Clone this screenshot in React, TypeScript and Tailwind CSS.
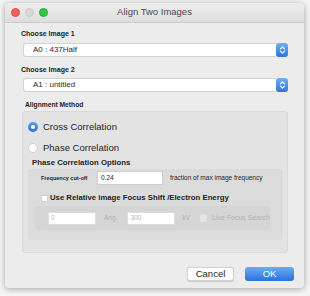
import React from "react";

function Stepper() {
  return (
    <div className="w-[12px] h-[14px] rounded-[3px] bg-gradient-to-b from-[#6fb0f5] to-[#2f74d8] flex items-center justify-center">
      <svg width="7" height="10" viewBox="0 0 7 10" fill="none" stroke="white" strokeWidth="1.1" strokeLinecap="round" strokeLinejoin="round">
        <path d="M1.5 3.8 L3.5 1.8 L5.5 3.8" />
        <path d="M1.5 6.2 L3.5 8.2 L5.5 6.2" />
      </svg>
    </div>
  );
}

function Select({ value }: { value: string }) {
  return (
    <div className="flex items-center h-[14px] w-[265px]">
      <div className="flex-1 h-[14px] bg-white rounded-l-[3px] border border-[#d4d3d4] border-r-0 flex items-center pl-[9px] text-[8px] text-[#2a2a2a]">
        {value}
      </div>
      <Stepper />
    </div>
  );
}

export default function App() {
  return (
    <div
      className="w-[310px] h-[296px] bg-[#f5f5f5] pt-[3px] pl-[5px]"
      style={{ fontFamily: '"Liberation Sans", Arial, sans-serif' }}
    >
      <div className="w-[299px] h-[285px] bg-[#edeced] rounded-[4px] shadow-[0_1px_6px_rgba(0,0,0,0.35)] flex flex-col overflow-hidden">
        {/* title bar */}
        <div className="h-[20px] shrink-0 grid grid-cols-[1fr_auto_1fr] items-center bg-gradient-to-b from-[#ededed] to-[#dedede] border-b border-[#cbcbcb]">
          <div className="flex items-center gap-[5px] pl-[6px]">
            <div className="w-[9px] h-[9px] rounded-full bg-[#fc5f57] border border-[#e2463f]" />
            <div className="w-[9px] h-[9px] rounded-full bg-[#d9d8d9] border border-[#cccbcc]" />
            <div className="w-[9px] h-[9px] rounded-full bg-[#33c748] border border-[#27aa35]" />
          </div>
          <div className="text-[9.5px] text-[#4a4a4a]">Align Two Images</div>
          <div />
        </div>

        {/* content */}
        <div className="flex flex-col pl-[16px]">
          <div className="mt-[6px] h-[9px] leading-[9px] text-[7px] font-bold text-[#222]">Choose Image 1</div>
          <div className="mt-[5px] ml-[2px]">
            <Select value="A0 : 437Half" />
          </div>
          <div className="mt-[8px] h-[9px] leading-[9px] text-[7px] font-bold text-[#222]">Choose Image 2</div>
          <div className="mt-[4px] ml-[2px]">
            <Select value="A1 : untitled" />
          </div>
          <div className="mt-[8px] ml-[4px] h-[9px] leading-[9px] text-[6.7px] font-bold text-[#222]">Alignment Method</div>

          {/* outer group */}
          <div className="mt-[2px] ml-[1px] w-[266px] h-[142px] bg-[#e4e3e4] border border-[#dad9da] rounded-[3px] flex flex-col">
            <div className="mt-[9px] ml-[5px] flex items-center h-[12px]">
              <div className="w-[10px] h-[10px] rounded-full bg-gradient-to-b from-[#5aa2f2] to-[#2b70d9] flex items-center justify-center">
                <div className="w-[4px] h-[4px] rounded-full bg-white" />
              </div>
              <span className="ml-[5px] text-[9.5px] text-[#1e1e1e]">Cross Correlation</span>
            </div>
            <div className="mt-[9px] ml-[5px] flex items-center h-[12px]">
              <div className="w-[10px] h-[10px] rounded-full bg-white border border-[#cfcecf]" />
              <span className="ml-[5px] text-[9.5px] text-[#1e1e1e]">Phase Correlation</span>
            </div>
            <div className="mt-[4px] ml-[9px] h-[10px] leading-[10px] text-[7.8px] font-bold text-[#222]">Phase Correlation Options</div>

            {/* inner group */}
            <div className="mt-[1px] ml-[5px] w-[255px] h-[71px] bg-[#dcdbdc] rounded-[3px] flex flex-col">
              <div className="mt-[2px] flex items-center h-[14px]">
                <span className="ml-[13px] w-[56px] text-[5.5px] text-[#222] font-semibold">Frequency cut-off</span>
                <div className="w-[66px] h-[14px] bg-white border border-[#d0cfd0] flex items-center pl-[3px] text-[6.5px] text-[#222]">0.24</div>
                <span className="ml-[7px] text-[6.5px] text-[#222]">fraction of max image frequency</span>
              </div>
              <div className="mt-[8px] ml-[13px] flex items-center h-[10px]">
                <div className="w-[7px] h-[7px] bg-white border border-[#d0cfd0] rounded-[1px]" />
                <span className="ml-[2px] text-[7.75px] font-bold text-[#222]">Use Relative image Focus Shift /Electron Energy</span>
              </div>
              {/* inner-inner */}
              <div className="mt-[3px] ml-[7px] w-[235px] h-[24px] bg-[#d6d5d6] rounded-[3px] flex items-center overflow-hidden">
                <div className="ml-[13px] w-[49px] h-[13px] bg-white border border-[#dddcdd] flex items-center pl-[2px] text-[6.5px] text-[#b8b8b8]">0</div>
                <span className="ml-[8px] w-[24px] text-[6.5px] text-[#b3b3b3]">Ang.</span>
                <div className="w-[49px] h-[13px] bg-white border border-[#dddcdd] flex items-center pl-[2px] text-[6.5px] text-[#b8b8b8]">300</div>
                <span className="ml-[7px] w-[17px] text-[6.5px] text-[#b3b3b3]">kV</span>
                <div className="w-[9px] h-[9px] bg-[#e6e5e6] border border-[#d8d7d8] rounded-[2px] shrink-0" />
                <span className="ml-[4px] text-[7px] text-[#b3b3b3] whitespace-nowrap">Live Focus Search</span>
              </div>
            </div>
          </div>
        </div>

        {/* buttons */}
        <div className="mt-[14px] flex justify-end gap-[11px] pr-[10px]">
          <div className="w-[47px] h-[14px] bg-white rounded-[3px] border border-[#d3d2d3] shadow-[0_0.5px_1px_rgba(0,0,0,0.15)] flex items-center justify-center text-[9.5px] text-[#1e1e1e]">
            Cancel
          </div>
          <div className="w-[49px] h-[14px] rounded-[3px] bg-gradient-to-b from-[#6aacf6] to-[#2a70dc] flex items-center justify-center text-[9.5px] text-white">
            OK
          </div>
        </div>
      </div>
    </div>
  );
}
